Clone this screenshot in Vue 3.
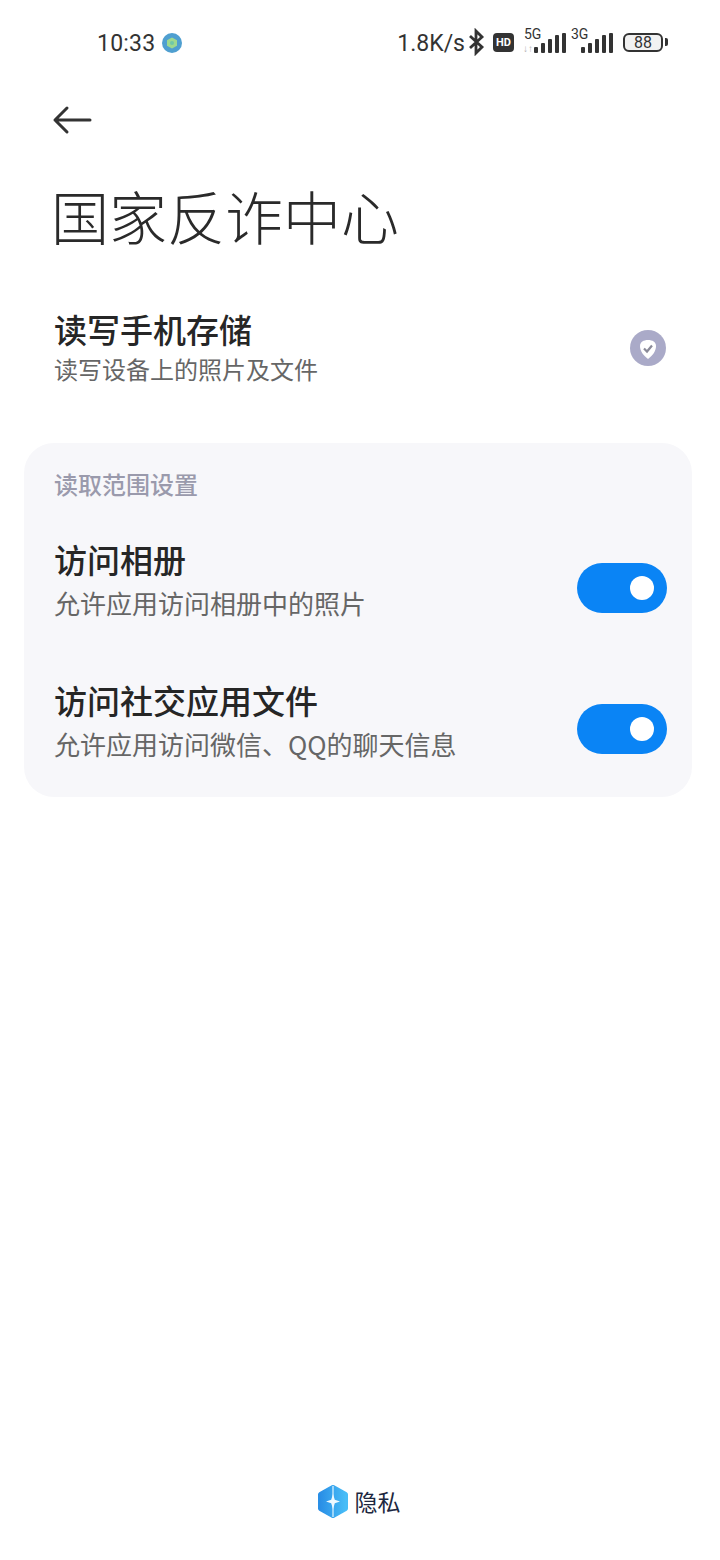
<script setup>
const options = [
  { title: "访问相册", desc: "允许应用访问相册中的照片" },
  { title: "访问社交应用文件", desc: "允许应用访问微信、QQ的聊天信息" },
];
</script>

<template>
  <div class="page">
    <div class="status-bar">
      <div class="status-left">
        <span class="time">10:33</span>
        <svg class="app-dot" width="20" height="20" viewBox="0 0 20 20">
          <circle cx="10" cy="10" r="10" fill="#4f9fd0" />
          <path d="M10 4.500l5 2.800v5.400l-5 2.800-5-2.800V7.300z" fill="#9ed98f" />
          <circle cx="10" cy="10" r="2" fill="#6fc8a8" />
        </svg>
      </div>
      <div class="status-right">
        <span class="speed">1.8K/s</span>
        <svg class="bt" width="17" height="28" viewBox="0 0 17 28">
          <path d="M2 8l12 11-6 6V3l6 6L2 20" fill="none" stroke="#333" stroke-width="2.800" />
        </svg>
        <span class="hd">HD</span>
        <div class="signal sig-5g">
          <span class="net">5G</span>
          <span class="arrows">↓↑</span>
          <i style="height: 6px"></i><i style="height: 10px"></i><i style="height: 14px"></i><i style="height: 18px"></i><i style="height: 20px"></i>
        </div>
        <div class="signal sig-3g">
          <span class="net">3G</span>
          <i style="height: 6px"></i><i style="height: 10px"></i><i style="height: 14px"></i><i style="height: 18px"></i><i style="height: 20px"></i>
        </div>
        <div class="battery"><span>88</span></div>
        <i class="battery-tip"></i>
      </div>
    </div>

    <div class="back">
      <svg width="40" height="30" viewBox="0 0 40 30">
        <path d="M38 15H3M15 3L3 15l12 12" fill="none" stroke="#333" stroke-width="3" stroke-linecap="round" stroke-linejoin="round" />
      </svg>
    </div>

    <h1 class="title">国家反诈中心</h1>

    <div class="perm">
      <div>
        <div class="item-title">读写手机存储</div>
        <div class="item-desc">读写设备上的照片及文件</div>
      </div>
      <svg class="shield" width="36" height="36" viewBox="0 0 36 36">
        <circle cx="18" cy="18" r="18" fill="#aaaac8" />
        <path d="M18 29C13 25 10 21 10 16c0-4 3.500-6 8-6s8 2 8 6c0 5-3 9-8 13z" fill="#fff" />
        <path d="M14 18.500l3 3 5-6" fill="none" stroke="#8a8a98" stroke-width="2.200" />
      </svg>
    </div>

    <div class="card">
      <div class="card-label">读取范围设置</div>
      <div v-for="opt in options" :key="opt.title" class="row">
        <div>
          <div class="item-title">{{ opt.title }}</div>
          <div class="item-desc large">{{ opt.desc }}</div>
        </div>
        <div class="switch"><span class="knob"></span></div>
      </div>
    </div>

    <div class="footer">
      <svg width="30" height="33" viewBox="0 0 30 33">
        <defs>
          <linearGradient id="logo-fill" x1="0" y1="0" x2="1" y2="0">
            <stop offset="0" stop-color="#2a8fe6" />
            <stop offset="1" stop-color="#48bdf7" />
          </linearGradient>
        </defs>
        <path d="M15 2.500L27.500 9.500v14L15 30.500 2.500 23.500v-14z" fill="url(#logo-fill)" stroke="url(#logo-fill)" stroke-width="5" stroke-linejoin="round" />
        <path d="M15 1v31" stroke="#bfe6fb" stroke-width="1.500" />
        <path d="M15 9l1.800 5.700L22 16.500l-5.200 1.800L15 24l-1.800-5.700L8 16.500l5.200-1.800z" fill="#eef9ff" />
      </svg>
      <span>隐私</span>
    </div>
  </div>
</template>

<style scoped>
.page {
  width: 720px;
  height: 1560px;
  background: #fff;
  color: #222;
  font-family: "Noto Sans CJK SC", "Noto Sans", sans-serif;
  overflow: hidden;
}

.status-bar {
  height: 44px;
  padding: 20px 52px 0 97px;
  display: flex;
  justify-content: space-between;
  align-items: center;
  color: #333;
  font-family: Roboto, "Noto Sans", sans-serif;
}

.status-left {
  display: flex;
  align-items: center;
  gap: 7px;
  margin-top: 1px;
}

.time {
  font-size: 23px;
  letter-spacing: 0.2px;
  margin-top: 1px;
}

.status-right {
  display: flex;
  align-items: center;
}

.speed {
  font-size: 23px;
  margin: 2px 3px 0 0;
}

.bt {
  margin-right: 8px;
}

.hd {
  width: 21px;
  height: 19px;
  border-radius: 4px;
  background: #333;
  color: #fff;
  font-size: 11px;
  font-weight: 700;
  line-height: 19px;
  text-align: center;
  margin-right: 10px;
}

.signal {
  position: relative;
  width: 42px;
  height: 30px;
  margin-bottom: 8px;
  display: flex;
  align-items: flex-end;
  justify-content: flex-end;
  gap: 2.500px;
}

.signal i {
  width: 4.500px;
  background: #333;
  border-radius: 1px;
}

.sig-5g {
  margin-right: 5px;
}

.sig-3g {
  margin-right: 10px;
}

.net {
  position: absolute;
  left: 0;
  top: 3px;
  font-size: 14px;
  line-height: 16px;
}

.arrows {
  position: absolute;
  left: -1px;
  bottom: -1px;
  font-size: 10px;
  font-weight: 700;
  color: #b0b0b0;
}

.battery {
  width: 40px;
  height: 19px;
  box-sizing: border-box;
  border: 2px solid #333;
  border-radius: 6px;
  font-size: 16px;
  line-height: 15px;
  text-align: center;
  background: #f2f2f2;
}

.battery-tip {
  width: 3px;
  height: 8px;
  margin-left: 2px;
  background: #333;
  border-radius: 0 2px 2px 0;
}

.back {
  padding: 41px 0 0 52px;
  height: 35px;
  line-height: 0;
}

.title {
  margin: 35px 0 0 51px;
  font-size: 58px;
  font-weight: 300;
  line-height: 80px;
  color: #2a2a2a;
}

.perm {
  margin-top: 51px;
  padding: 0 54px;
  display: flex;
  justify-content: space-between;
  align-items: center;
}

.shield {
  margin-top: 5px;
}

.item-title {
  font-size: 33px;
  font-weight: 500;
  line-height: 46px;
  color: #262626;
}

.item-desc {
  font-size: 24px;
  line-height: 32px;
  margin-top: 1px;
  color: #666;
}

.item-desc.large {
  font-size: 26px;
  margin-top: 5px;
}

.card {
  margin: 58px 28px 0 24px;
  height: 354px;
  box-sizing: border-box;
  padding: 24px 25px 0 30px;
  background: #f7f7fa;
  border-radius: 30px;
}

.card-label {
  font-size: 24px;
  font-weight: 500;
  line-height: 34px;
  color: #9a9aac;
  margin-bottom: 35px;
}

.row {
  display: flex;
  justify-content: space-between;
  align-items: flex-start;
  height: 141px;
}

.switch {
  width: 90px;
  height: 50px;
  margin-top: 27px;
  border-radius: 25px;
  background: #0a84f5;
  display: flex;
  align-items: center;
  justify-content: flex-end;
  padding-right: 13px;
  box-sizing: border-box;
}

.knob {
  width: 24px;
  height: 24px;
  border-radius: 50%;
  background: #fff;
}

.footer {
  margin-top: 687px;
  margin-right: 2px;
  display: flex;
  justify-content: center;
  align-items: center;
  gap: 7px;
  font-size: 23px;
  color: #1c2740;
}
</style>
